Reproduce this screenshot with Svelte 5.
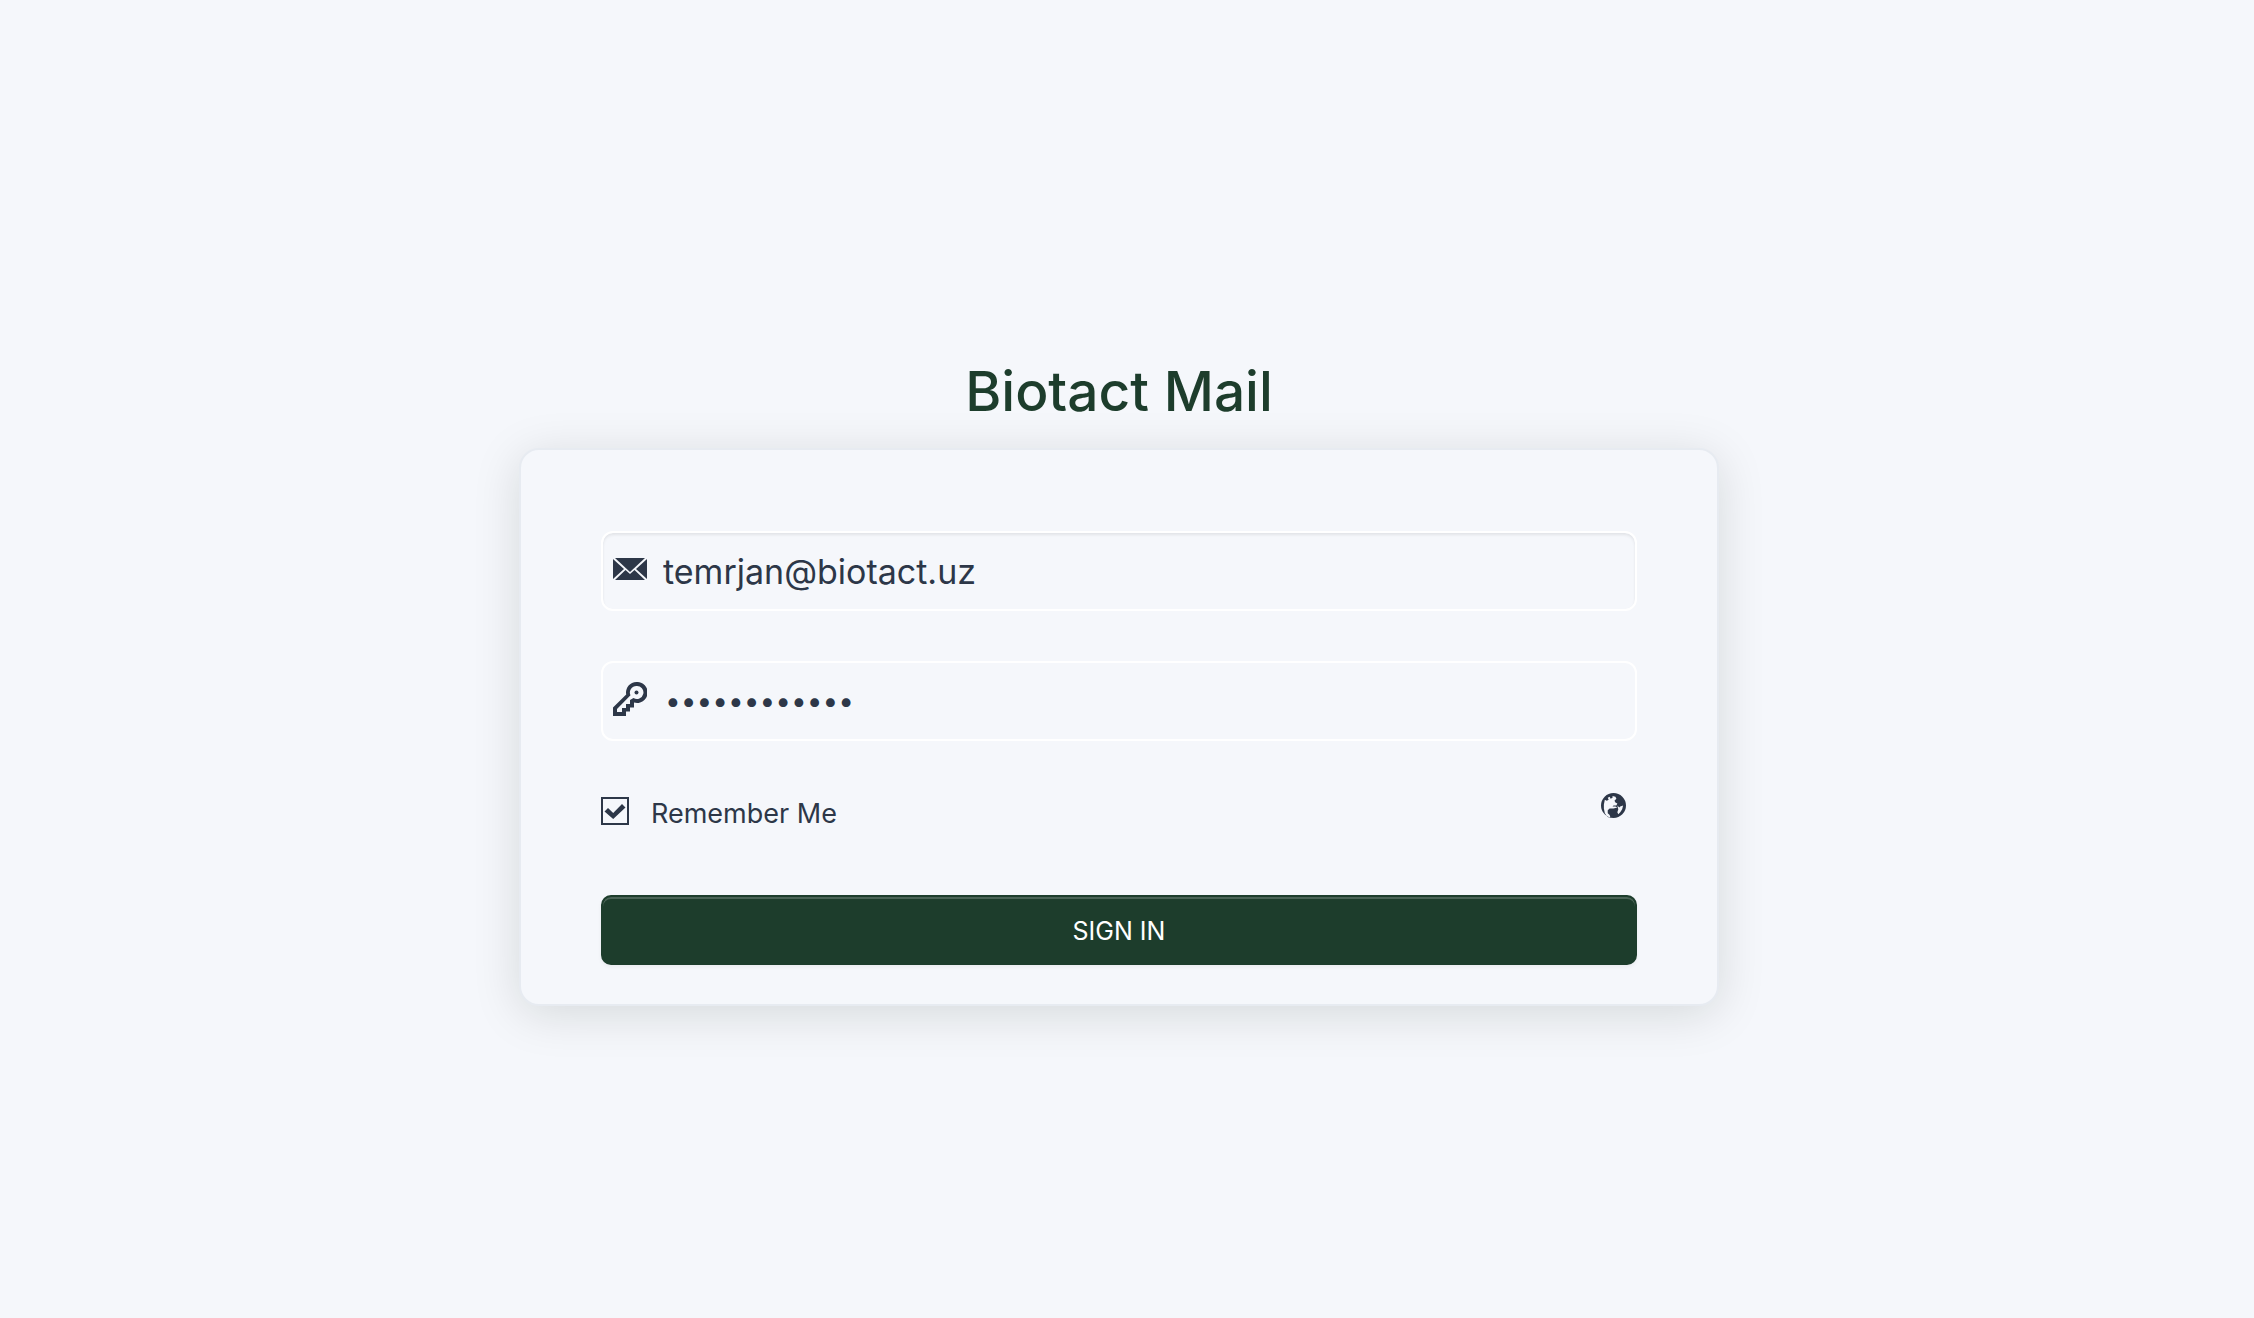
<script>
  let email = 'temrjan@biotact.uz';
  let password = 'biotact-mail';
  let remember = true;

  const submit = e => {
    e.preventDefault();
  };
</script>

<style>
  :global(body) {
    margin: 0;
    background: #f5f7fb;
  }
  .Login {
    display: flex;
    flex-direction: column;
    justify-content: center;
    align-items: center;
    box-sizing: border-box;
    min-height: 100vh;
    padding: 42px 16px 0 0;
    color: #2d3748;
    font-family: Inter, 'Liberation Sans', sans-serif;
  }
  .Login__title {
    margin: 0 0 20px;
    color: #1d3d2c;
    font-size: 55px;
    font-weight: 500;
    line-height: 74px;
  }
  .Login__form {
    box-sizing: border-box;
    width: 100%;
    max-width: 1200px;
    padding: 81px 80px 39px;
    border: 2px solid #e7ebf1;
    border-radius: 20px;
    background: #f5f7fb;
    box-shadow: 0 8px 48px rgba(0, 24, 0, 0.13);
  }
  .Field {
    display: flex;
    align-items: center;
    box-sizing: border-box;
    height: 80px;
    margin-bottom: 50px;
    padding: 0 10px;
    border: 2px solid #fff;
    border-radius: 12px;
  }
  .Field.active {
    box-shadow: inset 0 2px 3px rgba(0, 0, 0, 0.08);
  }
  .Field__icon {
    flex: none;
    width: 34px;
    height: 34px;
    margin-bottom: 4px;
    fill: currentColor;
  }
  .Field__input {
    flex: 1;
    min-width: 0;
    height: 72px;
    padding: 0 16px;
    border: 0;
    outline: 0;
    background: transparent;
    color: inherit;
    font: inherit;
    font-size: 34px;
  }
  .Field__input[type='password'] {
    padding-left: 18px;
    font-size: 28px;
  }
  .Options {
    display: flex;
    justify-content: space-between;
    align-items: flex-start;
    padding: 2px 11px 64px 0;
  }
  .Check {
    display: flex;
    align-items: flex-start;
    gap: 22px;
    padding-top: 4px;
    font-size: 27px;
    line-height: 34px;
  }
  .Check__box {
    display: grid;
    width: 28px;
    height: 28px;
  }
  .Check__box input,
  .Check__box svg {
    grid-area: 1 / 1;
    box-sizing: border-box;
    width: 28px;
    height: 28px;
    margin: 0;
  }
  .Check__box input {
    appearance: none;
    border: 2px solid #2d3748;
  }
  .Check__box svg {
    fill: currentColor;
    pointer-events: none;
  }
  .Language {
    display: block;
    padding: 0;
    border: 0;
    background: transparent;
    color: inherit;
    cursor: pointer;
  }
  .Language svg {
    display: block;
    width: 25px;
    height: 25px;
    fill: currentColor;
  }
  .Submit {
    display: block;
    width: 100%;
    height: 70px;
    padding: 2px 0 0;
    border: 2px solid #1d3d2c;
    border-radius: 10px;
    background: #1d3d2c;
    box-shadow: inset 0 2px 0 rgba(255, 255, 255, 0.2), 0 2px 4px rgba(0, 0, 0, 0.05);
    color: #fff;
    font: inherit;
    font-size: 25px;
    cursor: pointer;
  }
</style>

<main class="Login">
  <h1 class="Login__title">Biotact Mail</h1>
  <form class="Login__form" on:submit={submit}>
    <div class="Field active">
      <svg class="Field__icon" viewBox="0 0 34 34" aria-hidden="true">
        <path d="M2 6h30L17 20z" />
        <path d="M0 7l11 10L0 27zM34 7L23 17l11 10z" />
        <path d="M2 28l10.500-10 4.500 4 4.500-4L32 28z" />
      </svg>
      <input class="Field__input" type="email" aria-label="Email" bind:value={email} />
    </div>
    <div class="Field">
      <svg class="Field__icon" viewBox="0 0 34 34" aria-hidden="true">
        <path
          fill-rule="evenodd"
          d="M23.500 0a10.500 10.500 0 1 1-2.500 20.500v5h-4v4h-4V34H0v-8.500L13.200 12.500A10.500 10.500 0 0 1 23.500 0z
          M23.500 4a6.500 6.500 0 0 0-6 9.300L4 27v3h5v-4h4v-4h4v-4l3.500-2A6.500 6.500 0 1 0 23.500 4z" />
        <circle cx="23.500" cy="10.500" r="2" />
      </svg>
      <input class="Field__input" type="password" aria-label="Password" bind:value={password} />
    </div>
    <div class="Options">
      <label class="Check">
        <span class="Check__box">
          <input type="checkbox" bind:checked={remember} />
          {#if remember}
            <svg viewBox="0 0 28 28" aria-hidden="true">
              <path d="M3.500 14.500l3.500-3.500 5.200 5 8.800-9 3.500 3.500L12.200 22z" />
            </svg>
          {/if}
        </span>
        Remember Me
      </label>
      <button class="Language" type="button" aria-label="Language">
        <svg viewBox="0 0 26 26" aria-hidden="true">
          <path
            fill-rule="evenodd"
            d="M13 0a13 13 0 1 1 0 26 13 13 0 0 1 0-26z
            M4 7l2 1 2-1-1-2 2-1 1 2 2-1 0-2 3 1 1 2-2 2 1 2 2 1-1 2-3 0-1 1 3 0 2 1-4 1-4 0-2 2 0 3 2 2 1 3-3-1-3-4-1-5 0-4z
            M17 13l2 2 1-1 3-1-1 4-2 3-2 2-1-2 1-3z" />
        </svg>
      </button>
    </div>
    <button class="Submit" type="submit">SIGN IN</button>
  </form>
</main>
